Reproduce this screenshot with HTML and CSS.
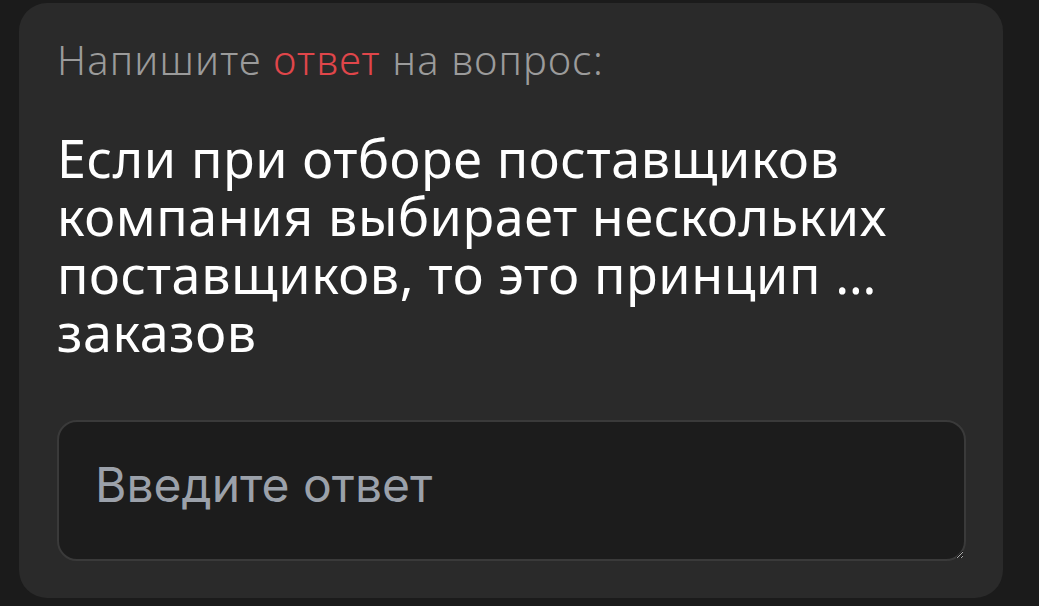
FILE: index.html
```html
<!DOCTYPE html>
<html lang="ru">

<head>
    <meta charset="UTF-8">
    <title>Вопрос</title>
    <link rel="stylesheet" href="styles.css">
</head>

<body>
    <div class="question-card">
        <div class="prompt">Напишите <span class="accent">ответ</span> на вопрос:</div>
        <div class="question-text">Если при отборе поставщиков компания выбирает нескольких поставщиков, то это принцип … заказов</div>
        <textarea class="answer" placeholder="Введите ответ"></textarea>
    </div>
</body>

</html>
```

FILE: styles.css
```css
body {
    font-family: "Noto Sans", Arial, sans-serif;
    background-color: #1b1b1b;
    margin: 0;
    padding: 3px 0 0 19px;
}

.question-card {
    background-color: #2a2a2a;
    border-radius: 28px;
    width: 984px;
    height: 595px;
    box-sizing: border-box;
    padding: 33px 38px 0 38px;
}

.prompt {
    color: #9b9b9b;
    font-size: 40px;
    font-weight: 300;
    letter-spacing: 1.2px;
    line-height: 48px;
}

.accent {
    color: #e0464a;
}

.question-text {
    color: #ffffff;
    font-size: 52px;
    letter-spacing: 0.6px;
    line-height: 58px;
    margin-top: 45px;
    width: 908px;
}

.answer {
    display: block;
    width: 909px;
    height: 141px;
    margin-top: 59px;
    box-sizing: border-box;
    background-color: #1c1c1c;
    border: 2px solid #3a3a3a;
    border-radius: 20px;
    padding: 33px 36px 0 36px;
    font-family: Inter, "Noto Sans", sans-serif;
    font-size: 48px;
    color: #ffffff;
    outline: none;
    color-scheme: dark;
}

.answer::placeholder {
    color: #9ba1aa;
}
```
